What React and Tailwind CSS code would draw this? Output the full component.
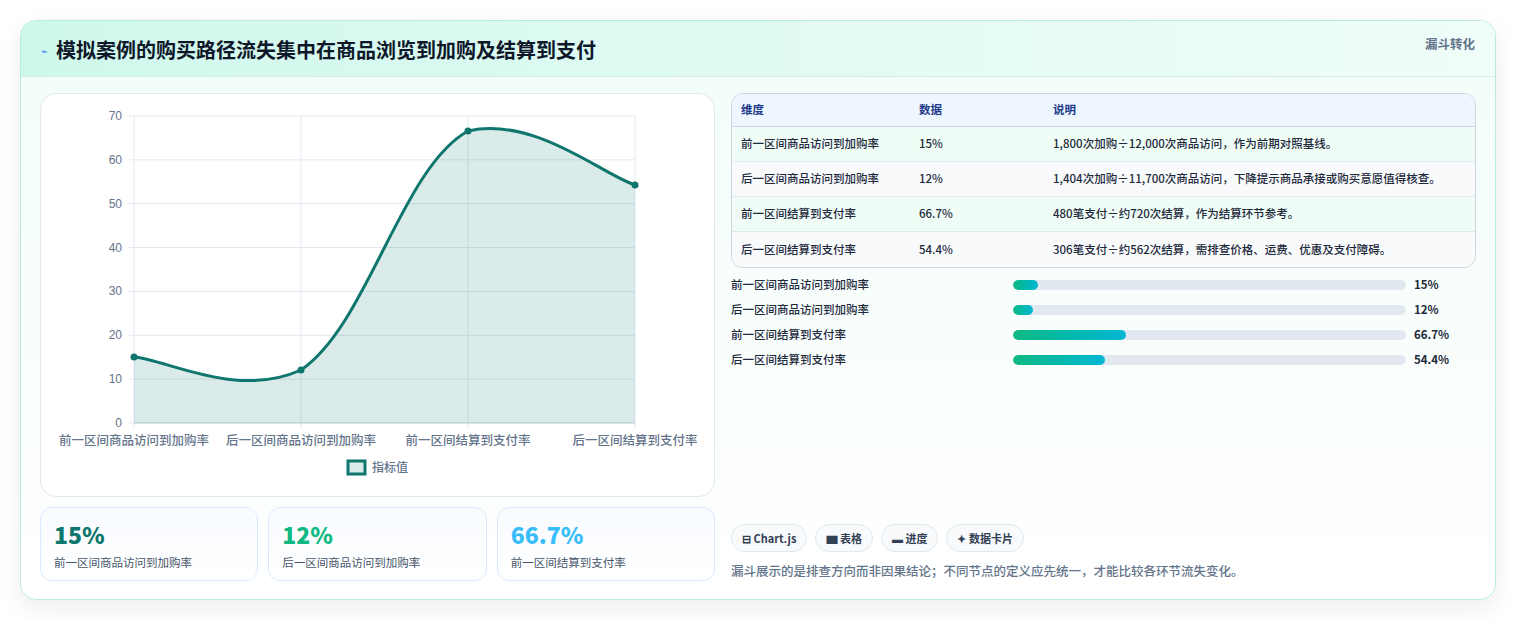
import React from "react";

const F = { fontFamily: '"Noto Sans CJK SC","Noto Sans",sans-serif' };
const rows = [
  ["前一区间商品访问到加购率", "15%", "1,800次加购÷12,000次商品访问，作为前期对照基线。"],
  ["后一区间商品访问到加购率", "12%", "1,404次加购÷11,700次商品访问，下降提示商品承接或购买意愿值得核查。"],
  ["前一区间结算到支付率", "66.7%", "480笔支付÷约720次结算，作为结算环节参考。"],
  ["后一区间结算到支付率", "54.4%", "306笔支付÷约562次结算，需排查价格、运费、优惠及支付障碍。"],
];
const bars = [["前一区间商品访问到加购率", 15, "15%"], ["后一区间商品访问到加购率", 12, "12%"], ["前一区间结算到支付率", 66.7, "66.7%"], ["后一区间结算到支付率", 54.4, "54.4%"]];

function Chart() {
  const ys = [0, 10, 20, 30, 40, 50, 60, 70];
  const y = (v) => 422 - v * 4.386;
  const xs = [133, 300, 467, 634];
  const pts = [[133, 356], [300, 369], [467, 130], [634, 184]];
  const line = "M133,356 C166.4,358.6 236,398 300,369 C366.8,323.8 400.2,167 467,130 C533.8,115 600.6,173.2 634,184";
  const labels = ["前一区间商品访问到加购率", "后一区间商品访问到加购率", "前一区间结算到支付率", "后一区间结算到支付率"];
  return (
    <svg viewBox="40 93 674 403" width="674" height="403" className="block">
      {ys.map((v) => (
        <g key={v}>
          <line x1="128" x2="634" y1={y(v)} y2={y(v)} stroke="#e2e8f0" strokeWidth="1" />
          <text x="121" y={y(v) + 4} textAnchor="end" fontSize="12" fill="#64748b" fontFamily="Liberation Sans, sans-serif">{v}</text>
        </g>
      ))}
      {xs.map((x) => (
        <line key={x} x1={x} x2={x} y1="115" y2="427" stroke="#e2e8f0" />
      ))}
      <line x1="133" x2="634" y1="422" y2="422" stroke="#cbd5e1" />
      <path d={line + " L634,422 L133,422 Z"} fill="#0f766e" fillOpacity="0.15" />
      <path d={line} fill="none" stroke="#0f766e" strokeWidth="3" />
      {pts.map(([a, b], i) => <circle key={i} cx={a} cy={b} r="3.5" fill="#0f766e" />)}
      {labels.map((l, i) => (
        <text key={i} x={xs[i]} y="444" textAnchor="middle" fontSize="12.5" fontWeight="500" fill="#64748b" style={F}>{l}</text>
      ))}
      <rect x="347" y="460" width="17" height="13" fill="#0f766e" fillOpacity="0.15" stroke="#0f766e" strokeWidth="3" />
      <text x="371" y="471" fontSize="12" fontWeight="500" fill="#64748b" style={F}>指标值</text>
    </svg>
  );
}

export default function App() {
  return (
    <div className="w-[1516px] h-[620px] bg-white pt-5 px-5" style={F}>
      <div className="w-[1476px] h-[580px] rounded-2xl border border-[#b9ece0] shadow-[0_8px_24px_rgba(15,23,42,0.08)] overflow-hidden bg-gradient-to-b from-[#f1fdf8] to-white flex flex-col">
        <div className="h-[56px] shrink-0 flex items-start justify-between px-5 bg-gradient-to-r from-[#cff8ec] to-[#f0fdf9] border-b border-[#d5efe8]">
          <div className="flex items-center gap-2 mt-[14px]">
            <span className="text-[11px] text-[#3b82f6]">⌁</span>
            <span className="text-[20px] font-bold text-[#0f172a]">模拟案例的购买路径流失集中在商品浏览到加购及结算到支付</span>
          </div>
          <span className="mt-[14px] text-[12.5px] font-bold text-[#64748b]">漏斗转化</span>
        </div>
        <div className="flex gap-4 px-[19px] pt-4">
          <div className="w-[675px] shrink-0 flex flex-col gap-[10px]">
            <div className="h-[404px] rounded-2xl border border-[#e2e8f0] bg-white overflow-hidden"><Chart /></div>
            <div className="flex gap-[10px]">
              {[["15%", "text-[#0f766e]"], ["12%", "text-[#10b981]"], ["66.7%", "text-[#38bdf8]"]].map(([v, c], i) => (
                <div key={i} className="w-[219px] h-[74px] rounded-xl border border-[#dbeafe] bg-gradient-to-b from-[#f8fbff] to-white px-[13px] pt-[10px]">
                  <div className={`text-[23px] font-extrabold leading-[32px] ${c}`}>{v}</div>
                  <div className="text-[11.5px] text-[#475569] mt-[4px]">{bars[i][0]}</div>
                </div>
              ))}
            </div>
          </div>
          <div className="flex-1 flex flex-col">
            <div className="rounded-xl border border-[#cbd5e1] overflow-hidden bg-white">
              <div className="flex h-[33px] items-center bg-[#eef6ff] border-b border-[#cbd5e1] text-[11.5px] font-bold text-[#1e3a8a] px-[9px]">
                <div className="w-[178px]">维度</div><div className="w-[134px]">数据</div><div>说明</div>
              </div>
              {rows.map((r, i) => (
                <div key={i} className={`flex h-[35px] items-center text-[11.5px] font-medium text-[#1e293b] px-[9px] ${i < 3 ? "border-b border-[#e2e8f0]" : ""} ${i % 2 ? "bg-[#f8fafc]" : "bg-[#f0fdf7]"}`}>
                  <div className="w-[178px]">{r[0]}</div><div className="w-[134px]">{r[1]}</div><div>{r[2]}</div>
                </div>
              ))}
            </div>
            <div className="mt-[8px] flex flex-col gap-[7px]">
              {bars.map(([l, v, t], i) => (
                <div key={i} className="flex items-center h-[18px] text-[11.5px] font-medium text-[#1e293b]">
                  <div className="w-[282px]">{l}</div>
                  <div className="w-[393px] h-[10px] rounded-full bg-[#e2e8f0] overflow-hidden">
                    <div className="h-full rounded-full bg-gradient-to-r from-[#10b981] to-[#06b6d4]" style={{ width: `${v * 0.43}%` }} />
                  </div>
                  <div className="ml-[8px] font-bold">{t}</div>
                </div>
              ))}
            </div>
            <div className="mt-[155px] flex gap-[8px]">
              {["⊟ Chart.js", "▆ 表格", "▬ 进度", "✦ 数据卡片"].map((c) => (
                <span key={c} className="h-[28px] px-[10px] rounded-full border border-[#e2e8f0] bg-[#f8fafc] text-[11px] font-bold text-[#334155] flex items-center">{c}</span>
              ))}
            </div>
            <div className="mt-[10px] text-[12.5px] font-medium text-[#64748b]">漏斗展示的是排查方向而非因果结论；不同节点的定义应先统一，才能比较各环节流失变化。</div>
          </div>
        </div>
      </div>
    </div>
  );
}
